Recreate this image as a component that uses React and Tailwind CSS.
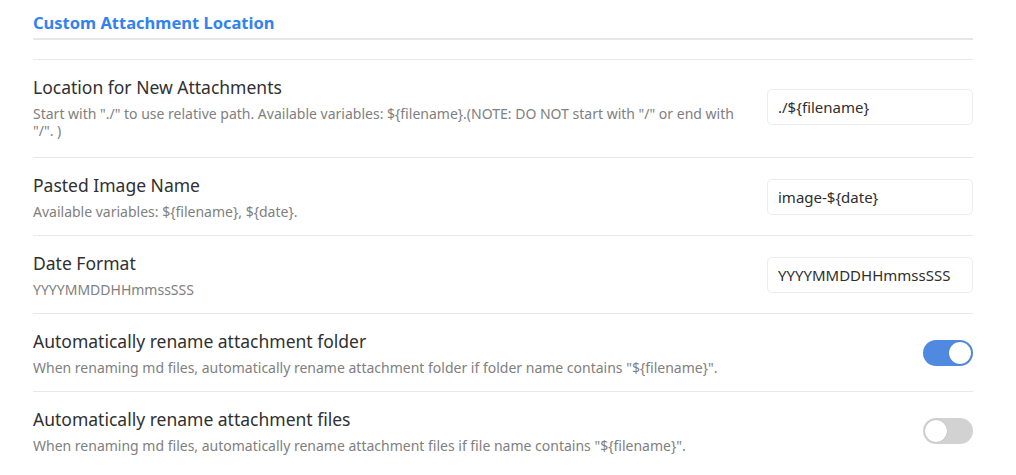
import { useState } from "react";

const font = { fontFamily: '"Noto Sans", "Open Sans", sans-serif' };

function Info({ name, desc }) {
  return (
    <div className="mr-[30px] flex-1">
      <div className="text-[17.5px] leading-6 text-[#303030]">{name}</div>
      <div className="mt-[6px] text-[14px] leading-[17px] text-[#808080]">{desc}</div>
    </div>
  );
}

function TextSetting({ name, desc, value, tall }) {
  return (
    <div className={`flex items-center border-t border-[#e8e8ea] pt-[15px] ${tall ? "pb-[18px]" : "pb-[15px]"}`}>
      <Info name={name} desc={desc} />
      <input
        type="text"
        defaultValue={value}
        className="h-9 w-[206px] rounded-[5px] border border-[#ececef] bg-white px-[10px] text-[15px] text-[#2e2e2e] outline-none"
        style={font}
      />
    </div>
  );
}

function ToggleSetting({ name, desc, initial }) {
  const [on, setOn] = useState(initial);
  return (
    <div className="flex items-center border-t border-[#e8e8ea] pt-[15px] pb-[15px]">
      <Info name={name} desc={desc} />
      <button
        type="button"
        onClick={() => setOn((v) => !v)}
        className={`flex h-[26px] w-[50px] items-center rounded-full p-[2px] ${
          on ? "justify-end bg-[#5089e0]" : "justify-start bg-[#d2d2d2]"
        }`}
      >
        <span className="block h-[22px] w-[22px] rounded-full bg-white shadow-[0_0_1px_rgba(0,0,0,0.3)]" />
      </button>
    </div>
  );
}

export default function App() {
  return (
    <div className="min-h-screen bg-white pl-[33px] pr-[43px]" style={font}>
      <div className="border-b-2 border-[#e6e6ec] pt-[11px] pb-[3px]">
        <h3 className="text-[16.5px] font-bold leading-6 text-[#3282ef]">Custom Attachment Location</h3>
      </div>
      <div className="mt-[19px]">
        <TextSetting
          name="Location for New Attachments"
          desc={'Start with "./" to use relative path. Available variables: ${filename}.(NOTE: DO NOT start with "/" or end with "/". )'}
          value="./${filename}"
          tall
        />
        <TextSetting
          name="Pasted Image Name"
          desc="Available variables: ${filename}, ${date}."
          value="image-${date}"
        />
        <TextSetting name="Date Format" desc="YYYYMMDDHHmmssSSS" value="YYYYMMDDHHmmssSSS" />
        <ToggleSetting
          name="Automatically rename attachment folder"
          desc={'When renaming md files, automatically rename attachment folder if folder name contains "${filename}".'}
          initial={true}
        />
        <ToggleSetting
          name="Automatically rename attachment files"
          desc={'When renaming md files, automatically rename attachment files if file name contains "${filename}".'}
          initial={false}
        />
      </div>
    </div>
  );
}
